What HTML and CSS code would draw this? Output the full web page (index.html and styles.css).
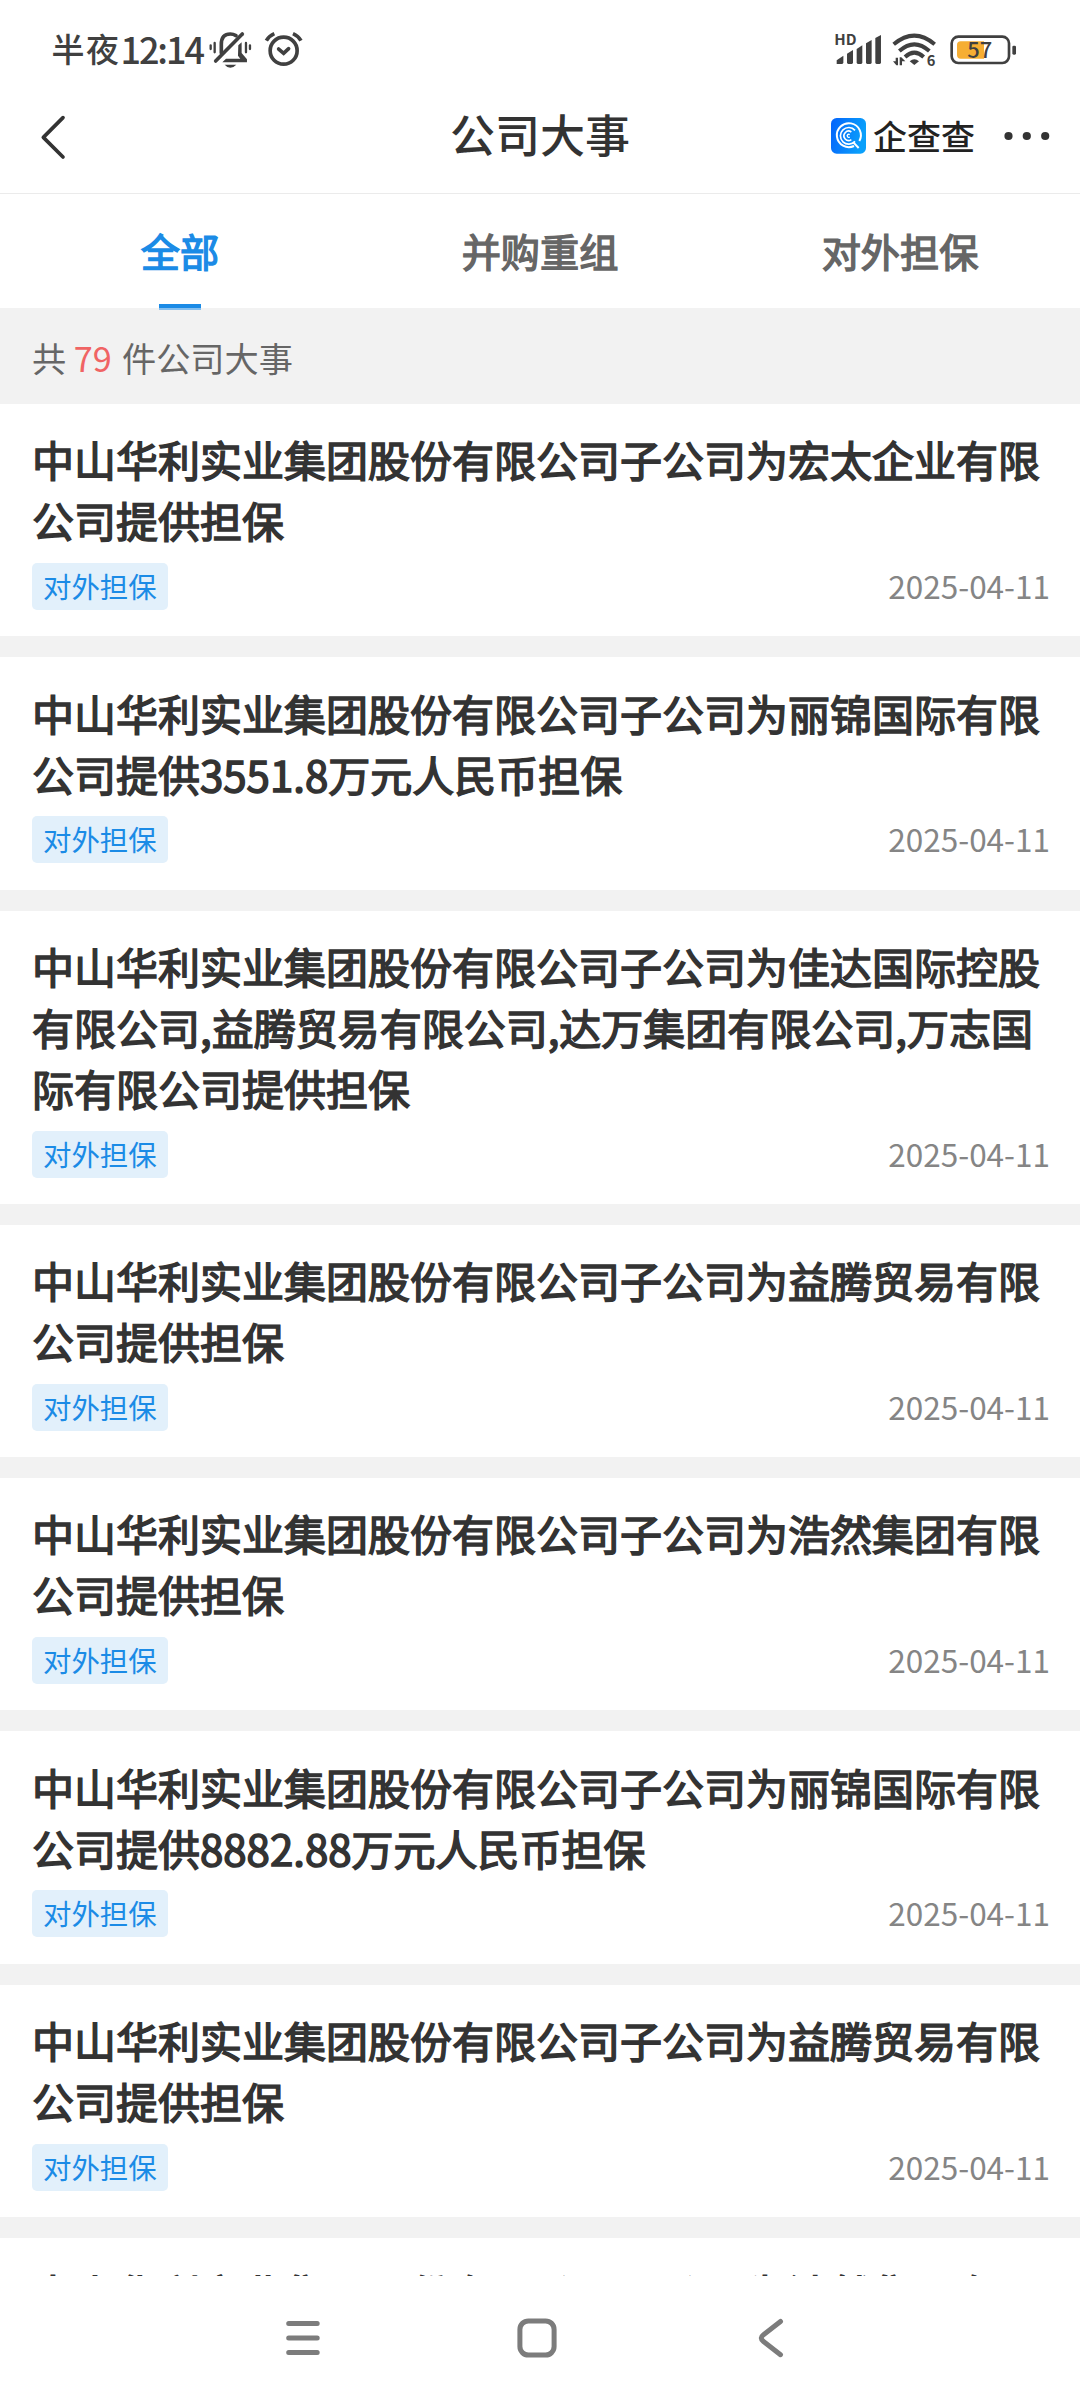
FILE: index.html
```html
<!DOCTYPE html>
<html lang="zh-CN">
<head>
<meta charset="utf-8">
<title>公司大事</title>
<link rel="stylesheet" href="styles.css">
</head>
<body>
<div class="screen">
  <div class="status">
    <div class="status-left">
      <span class="period">半夜</span><span class="time">12:14</span>
      <svg class="bell" viewBox="630 94 130 112" width="43.3" height="37.3">
        <g fill="none" stroke="#404040" stroke-width="11" stroke-linecap="round" stroke-linejoin="round">
          <path d="M667 160V134Q667 103 694 103Q703 103 711 108"/>
          <path d="M650 184L730 103"/>
        </g>
        <path d="M718 137L728 128V160L744 179V188H670L681 177H724L717 168Z" fill="#404040"/>
        <path d="M677 195H712Q704 204 694 204Q684 204 677 195Z" fill="#404040"/>
        <path d="M635 137V148M647 130V158M741 130V158M753 137V148" fill="none" stroke="#404040" stroke-width="7" stroke-linecap="round"/>
      </svg>
      <svg class="alarm" viewBox="796 93 118 110" width="39.3" height="36.7">
        <g fill="none" stroke="#404040" stroke-width="11">
          <circle cx="855" cy="152" r="40.5"/>
          <path d="M840 147L855 160L870 146" stroke-linecap="round"/>
          <path d="M803 122Q811 108 827 101M883 101Q899 108 907 122"/>
        </g>
      </svg>
    </div>
    <div class="status-right">
      <svg class="signal" viewBox="102 100 144 100" width="48" height="33.3">
        <text class="hd" x="103" y="136" textLength="67" lengthAdjust="spacingAndGlyphs">HD</text>
        <g fill="#404040">
          <path d="M110 193V182L130 168V188Q130 193 126 193Z"/>
          <path d="M141 188V162L159 151V188Q159 193 155 193H145Q141 193 141 188Z"/>
          <path d="M170 188V148L187 137V188Q187 193 183 193H174Q170 193 170 188Z"/>
          <path d="M198 188V131L215 121V188Q215 193 211 193H202Q198 193 198 188Z"/>
          <path d="M226 188V115L243 106V188Q243 193 239 193H230Q226 193 226 188Z"/>
        </g>
      </svg>
      <svg class="wifi" viewBox="278 100 134 102" width="44.7" height="34">
        <g fill="none" stroke="#404040" stroke-width="12">
          <path d="M283 134Q345 82 406 134"/>
          <path d="M300 154Q345 114 390 154"/>
          <path d="M317 172Q345 146 373 172"/>
        </g>
        <path d="M331 185Q345 172 359 185L345 196Z" fill="#404040"/>
        <path d="M281 185H289V174H296V197H291ZM301 197V173H306L318 185H308V197Z" fill="#404040"/>
        <text class="six" x="382" y="198">6</text>
      </svg>
      <svg class="battery" viewBox="450 103 200 90" width="66.7" height="30">
        <rect x="455" y="108" width="172" height="79" rx="20" fill="none" stroke="#404040" stroke-width="8"/>
        <path d="M482 122H552V174H482Q471 174 471 163V133Q471 122 482 122Z" fill="#f6ae33"/>
        <rect x="637" y="135" width="11" height="27" rx="4" fill="#404040"/>
        <text class="level" x="502" y="171" textLength="75" lengthAdjust="spacingAndGlyphs">57</text>
      </svg>
    </div>
  </div>

  <header class="header">
    <svg class="back" viewBox="122 345 78 135" width="26" height="45">
      <path d="M191 353L132 412L191 471" fill="none" stroke="#333" stroke-width="11" stroke-linecap="round" stroke-linejoin="round"/>
    </svg>
    <h1 class="title">公司大事</h1>
    <div class="brand">
      <svg viewBox="0 0 105 107" width="35" height="35.7">
        <defs><linearGradient id="blue" x1="0" x2="1" y1="0" y2="0.25"><stop offset="0" stop-color="#0563fb"/><stop offset="1" stop-color="#0aa0fb"/></linearGradient></defs>
        <rect width="105" height="107" rx="17" fill="url(#blue)"/>
        <g fill="none" stroke="#fff" stroke-width="6">
          <path d="M69 84A36 36 0 1 1 85 69M67 73L83 90"/>
          <path d="M72 37A25 25 0 1 0 72 70" stroke-width="5"/>
          <path d="M61 42A14 14 0 1 0 61 65" stroke-width="5"/>
          <path d="M56 50A4.500 4.500 0 1 0 56 57" stroke-width="4"/>
        </g>
      </svg>
      <span class="brand-name">企查查</span>
      <svg class="dots" viewBox="0 0 46 10" width="46" height="10" fill="#333"><circle cx="4.500" cy="5" r="4.100"/><circle cx="22.800" cy="5" r="4.100"/><circle cx="41.200" cy="5" r="4.100"/></svg>
    </div>
  </header>

  <nav class="tabs">
    <div class="tab active">全部</div>
    <div class="tab">并购重组</div>
    <div class="tab">对外担保</div>
  </nav>

  <div class="summary">共 <span class="count">79</span> 件公司大事</div>

  <main class="list">
    <article class="card"><h2>中山华利实业集团股份有限公司子公司为宏太企业有限公司提供担保</h2><div class="meta"><span class="tag">对外担保</span><time>2025-04-11</time></div></article>
    <article class="card"><h2>中山华利实业集团股份有限公司子公司为丽锦国际有限公司提供3551.8万元人民币担保</h2><div class="meta"><span class="tag">对外担保</span><time>2025-04-11</time></div></article>
    <article class="card"><h2>中山华利实业集团股份有限公司子公司为佳达国际控股有限公司,益腾贸易有限公司,达万集团有限公司,万志国际有限公司提供担保</h2><div class="meta"><span class="tag">对外担保</span><time>2025-04-11</time></div></article>
    <article class="card"><h2>中山华利实业集团股份有限公司子公司为益腾贸易有限公司提供担保</h2><div class="meta"><span class="tag">对外担保</span><time>2025-04-11</time></div></article>
    <article class="card"><h2>中山华利实业集团股份有限公司子公司为浩然集团有限公司提供担保</h2><div class="meta"><span class="tag">对外担保</span><time>2025-04-11</time></div></article>
    <article class="card"><h2>中山华利实业集团股份有限公司子公司为丽锦国际有限公司提供8882.88万元人民币担保</h2><div class="meta"><span class="tag">对外担保</span><time>2025-04-11</time></div></article>
    <article class="card"><h2>中山华利实业集团股份有限公司子公司为益腾贸易有限公司提供担保</h2><div class="meta"><span class="tag">对外担保</span><time>2025-04-11</time></div></article>
    <article class="card"><h2>中山华利实业集团股份有限公司子公司为浩然集团有限公司提供担保</h2></article>
  </main>

  <footer class="sysnav">
    <svg viewBox="0 0 44 44" width="44" height="44"><path d="M7.700 7.500H36.200M7.700 22H36.200M7.700 36.500H36.200"/></svg>
    <svg viewBox="0 0 44 44" width="44" height="44"><rect x="4.900" y="4.900" width="34.200" height="34.200" rx="8.500"/></svg>
    <svg viewBox="0 0 44 44" width="44" height="44"><path d="M31.500 5.500L14.500 18.700Q10 22 14.500 25.500L31.500 38.700"/></svg>
  </footer>
</div>
</body>
</html>
```
FILE: styles.css
```css
* { box-sizing: border-box; }

body {
  margin: 0;
  background: #fff;
  color: #333;
  font-family: "Noto Sans CJK SC", "Noto Sans", sans-serif;
}

.screen {
  display: flex;
  flex-direction: column;
  width: 1080px;
  height: 2400px;
  overflow: hidden;
}

svg { display: block; flex: none; overflow: visible; }

.status {
  display: flex;
  justify-content: space-between;
  align-items: center;
  height: 78px;
  padding: 20px 63px 0 51.500px;
  color: #404040;
  font-weight: 500;
}

.status-left, .status-right { display: flex; align-items: center; }
.status-right { padding-top: 1px; }
.period { font-size: 33px; letter-spacing: 1.5px; line-height: 56px; padding-bottom: 2px; }
.time { font-size: 36px; letter-spacing: -2.100px; line-height: 56px; padding-bottom: 2px; }
.bell { margin-left: 6px; margin-top: 2px; }
.alarm { margin-left: 12px; }
.hd { font: 700 42px "Noto Sans CJK SC", sans-serif; fill: #404040; }
.six { font: 700 44px "Noto Sans CJK SC", sans-serif; fill: #404040; }
.level { font: 500 66px "Noto Sans CJK SC", sans-serif; fill: #404040; }
.wifi { margin-left: 10px; }
.battery { margin-left: 14px; }

.header {
  display: grid;
  grid-template-columns: 1fr auto 1fr;
  align-items: center;
  height: 116px;
  padding: 0 30px 0 40px;
  border-bottom: 1px solid #ebebeb;
}

.back { margin-top: 3px; }
.title { margin: 0 10px 0 0; padding-bottom: 4px; font-size: 45px; font-weight: 500; line-height: 64px; }
.brand { display: flex; align-items: center; justify-content: flex-end; padding-top: 1px; }
.brand-name { margin-left: 7px; padding-bottom: 1px; font-size: 34px; line-height: 48px; font-weight: 500; color: #222; }
.dots { margin-left: 29px; }

.tabs { display: grid; grid-template-columns: repeat(3, 1fr); height: 114px; }
.tab {
  position: relative;
  font-size: 39.200px;
  font-weight: 400;
  line-height: 112px;
  text-align: center;
  color: #666;
  -webkit-text-stroke: 1.400px currentColor;
}
.tab.active { color: #1b8be6; }
.tab.active::after {
  content: "";
  position: absolute;
  left: 50%;
  bottom: -2px;
  width: 42px;
  height: 6px;
  margin-left: -21px;
  background: linear-gradient(#1b8be6 4px, #85bfef 4px);
}

.summary {
  height: 96px;
  padding-left: 32px;
  background: #f2f2f2;
  color: #666;
  font-size: 34.200px;
  line-height: 98px;
}
.count { margin-right: 2.500px; color: #f06464; }

.list {
  display: flex;
  flex: 1;
  flex-direction: column;
  gap: 21px;
  min-height: 0;
  overflow: hidden;
  background: #f2f2f2;
}
.card { flex: none; padding: 24.300px 30px 26.300px 32px; background: #fff; }
.card h2 {
  margin: 0;
  font-size: 42px;
  font-weight: 400;
  line-height: 61px;
  -webkit-text-stroke: 1.500px currentColor;
}
.meta {
  display: flex;
  align-items: center;
  justify-content: space-between;
  height: 47px;
  margin-top: 12.700px;
}
.tag {
  height: 47px;
  padding: 0 11px;
  border-radius: 5px;
  background: #e2f0fb;
  color: #1b8be6;
  font-size: 28.400px;
  line-height: 45px;
}
.meta time { color: #858585; font-size: 31.500px; line-height: 45px; padding-bottom: 2px; }

.sysnav {
  display: flex;
  align-items: center;
  gap: 190px;
  height: 124px;
  padding-left: 281px;
  background: #fff;
}
.sysnav svg { fill: none; stroke: #7c7c7c; stroke-width: 5; stroke-linecap: round; }
```
